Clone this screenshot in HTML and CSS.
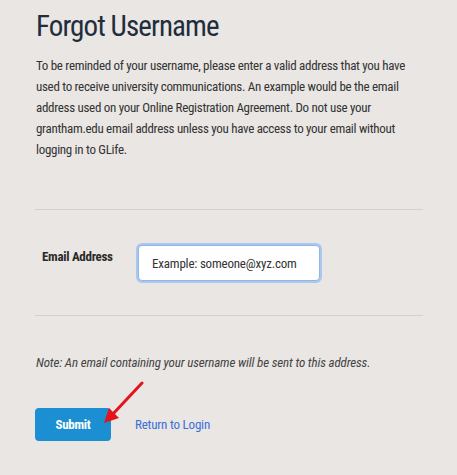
FILE: index.html
```html
<!DOCTYPE html>
<html lang="en">
<head>
  <meta charset="UTF-8" />
  <title>Forgot Username</title>
  <link rel="stylesheet" href="styles.css">
</head>
<body>
  <div class="pagina">
    <h1>Forgot Username</h1>
    <p class="intro">To be reminded of your username, please enter a valid address that you have used to receive university communications. An example would be the email address used on your Online Registration Agreement. Do not use your grantham.edu email address unless you have access to your email without logging in to GLife.</p>
    <hr>
    <div class="fila">
      <label for="correo">Email Address</label>
      <input id="correo" type="text" placeholder="Example: someone@xyz.com">
    </div>
    <hr>
    <p class="nota">Note: An email containing your username will be sent to this address.</p>
    <div class="acciones">
      <button id="enviar">Submit</button>
      <a href="#" class="volver">Return to Login</a>
      <svg class="flecha" width="50" height="50" viewBox="0 0 50 50">
        <line x1="42" y1="2" x2="12" y2="34" stroke="#e3141b" stroke-width="3" stroke-linecap="round" />
        <polygon points="4,42 9,27 19,37" fill="#e3141b" />
      </svg>
    </div>
  </div>
</body>
</html>
```

FILE: styles.css
```css
body {
  margin: 0;
  background-color: #e9e6e3;
  font-family: "Roboto Condensed", "Liberation Sans", sans-serif;
  color: #333;
}
.pagina {
  width: 388px;
  padding: 8px 0 0 35px;
}
h1 {
  margin: 0 0 0 1px;
  font-size: 29px;
  letter-spacing: -0.9px;
  font-weight: normal;
  color: #1f2d3d;
  line-height: 36px;
}
.intro {
  margin: 11px 0 0 1px;
  font-size: 13px;
  letter-spacing: -0.3px;
  line-height: 21px;
}
hr {
  border: none;
  border-top: 1px solid #d3d0cd;
  margin: 0;
}
.intro + hr {
  margin-top: 49px;
}
.fila {
  display: flex;
  align-items: flex-start;
  padding: 35px 0 34px 7px;
}
label {
  font-weight: bold;
  font-size: 13px;
  letter-spacing: -0.3px;
  color: #2a2a2a;
  width: 96px;
  margin-top: 4px;
}
input {
  width: 182px;
  height: 36px;
  box-sizing: border-box;
  border: 1px solid #8fb6e6;
  border-radius: 4px;
  box-shadow: 0 0 0 2px #aac8ee;
  padding: 0 13px;
  font-family: inherit;
  font-size: 13px;
  letter-spacing: -0.2px;
  background: white;
  outline: none;
}
input::placeholder {
  color: #333;
}
.nota {
  margin: 39px 0 0 1px;
  font-size: 13px;
  letter-spacing: -0.15px;
  font-style: italic;
  color: #444;
}
.acciones {
  position: relative;
  display: flex;
  align-items: center;
  gap: 24px;
  margin-top: 38px;
}
#enviar {
  width: 76px;
  height: 33px;
  border: none;
  border-radius: 4px;
  background-color: #1c8fd3;
  color: white;
  font-family: inherit;
  font-weight: bold;
  font-size: 13px;
  letter-spacing: -0.3px;
  cursor: pointer;
}
.volver {
  color: #3b6fd8;
  text-decoration: none;
  font-size: 13px;
  letter-spacing: -0.2px;
}
.flecha {
  position: absolute;
  left: 65px;
  top: -27px;
}
```
